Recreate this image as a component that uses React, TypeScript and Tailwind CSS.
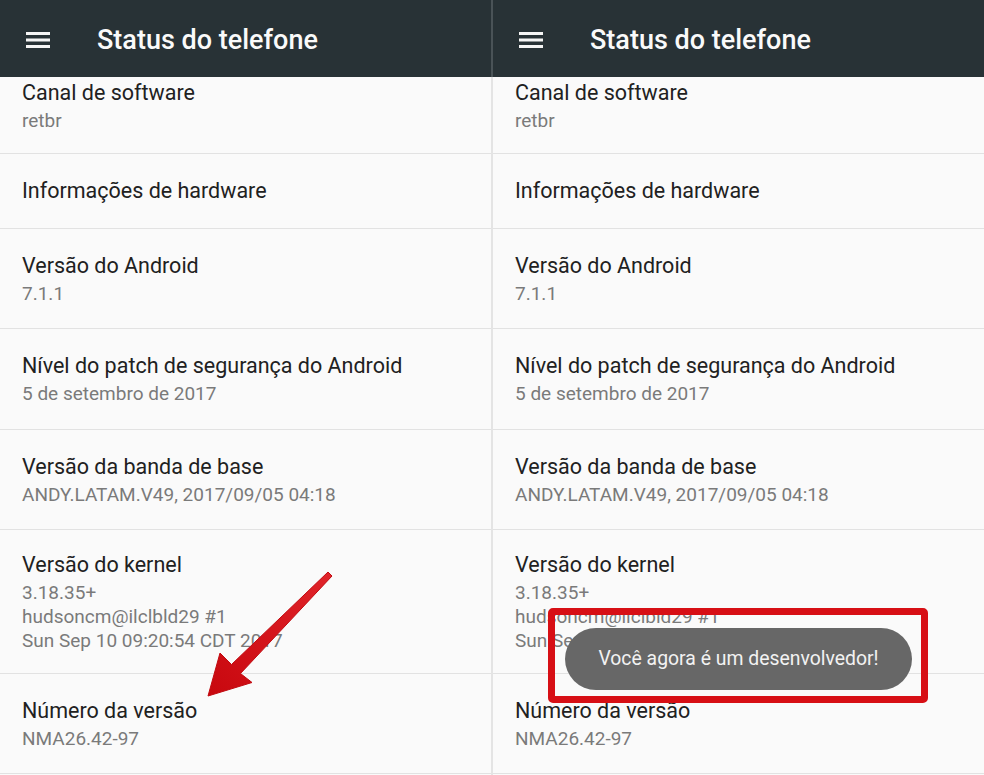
import type { ReactNode } from 'react'

type Row = {
  title: string
  lines?: string[]
  h: string
  first?: boolean
}

const rows: Row[] = [
  { title: 'Canal de software', lines: ['retbr'], h: 'h-[77px]', first: true },
  { title: 'Informações de hardware', h: 'h-[75px]' },
  { title: 'Versão do Android', lines: ['7.1.1'], h: 'h-[100px]' },
  { title: 'Nível do patch de segurança do Android', lines: ['5 de setembro de 2017'], h: 'h-[101px]' },
  { title: 'Versão da banda de base', lines: ['ANDY.LATAM.V49, 2017/09/05 04:18'], h: 'h-[100px]' },
  {
    title: 'Versão do kernel',
    lines: ['3.18.35+', 'hudsoncm@ilclbld29 #1', 'Sun Sep 10 09:20:54 CDT 2017'],
    h: 'h-[144px]',
  },
  { title: 'Número da versão', lines: ['NMA26.42-97'], h: 'h-[100px]' },
]

function Hamburger() {
  return (
    <svg width="24" height="18" viewBox="0 0 24 18" className="shrink-0">
      <rect x="0" y="1" width="24" height="3" fill="#f5f5f5" />
      <rect x="0" y="7.5" width="24" height="3" fill="#f5f5f5" />
      <rect x="0" y="14" width="24" height="3" fill="#f5f5f5" />
    </svg>
  )
}

function SettingRow({ row }: { row: Row }) {
  return (
    <div
      className={`${row.h} flex flex-col border-b border-[#e2e2e2] px-[22px] ${
        row.first ? 'justify-start pt-[2px]' : 'justify-center'
      }`}
    >
      <p className="text-[21.5px] leading-[28px] text-[#212121] whitespace-nowrap">{row.title}</p>
      {row.lines && (
        <div className="pt-[2px]">
          {row.lines.map((l) => (
            <p key={l} className="text-[19px] leading-[24px] text-[#7a7a7a] whitespace-nowrap">
              {l}
            </p>
          ))}
        </div>
      )}
    </div>
  )
}

function Panel({ children, className }: { children?: ReactNode; className?: string }) {
  return (
    <div className={`relative flex flex-col bg-[#fafafa] ${className ?? ''}`}>
      <div className="h-[77px] flex items-center gap-[47px] pl-[26px] pt-[3px] bg-[#283236]">
        <Hamburger />
        <h1 className="text-[27px] font-medium text-[#fafafa]">Status do telefone</h1>
      </div>
      {rows.map((r) => (
        <SettingRow key={r.title} row={r} />
      ))}
      {children}
    </div>
  )
}

export default function App() {
  return (
    <div
      className="relative w-[984px] h-[775px] overflow-hidden flex bg-[#fafafa]"
      style={{ fontFamily: 'Roboto, "Noto Sans", sans-serif' }}
    >
      <Panel className="w-[491px]" />
      <div className="w-[2px] flex flex-col">
        <div className="h-[77px] bg-[#4a5357]" />
        <div className="flex-1 bg-[#e4e4e4]" />
      </div>
      <Panel className="flex-1">
        <div className="absolute left-[55px] top-[608px] w-[380px] h-[95px] rounded-[5px] border-[7px] border-[#d70f15]" />
        <div className="absolute left-[72px] top-[628px] w-[347px] h-[62px] rounded-full bg-[#676767] flex items-center justify-center">
          <span className="text-[19.4px] text-[#f2f2f2]">Você agora é um desenvolvedor!</span>
        </div>
      </Panel>

      <svg className="absolute left-0 top-0 pointer-events-none" width="984" height="775" viewBox="0 0 984 775">
        <defs>
          <linearGradient id="arr" x1="330" y1="574" x2="208" y2="696" gradientUnits="userSpaceOnUse">
            <stop offset="0" stopColor="#e0242a" />
            <stop offset="1" stopColor="#c8070e" />
          </linearGradient>
        </defs>
        <polygon
          points="328,572 332,576 240.5,673.5 252,682.5 208,696 220,653 231.5,664.5"
          fill="url(#arr)"
          stroke="#c10a10"
          strokeWidth="1"
          strokeLinejoin="round"
        />
      </svg>
    </div>
  )
}
